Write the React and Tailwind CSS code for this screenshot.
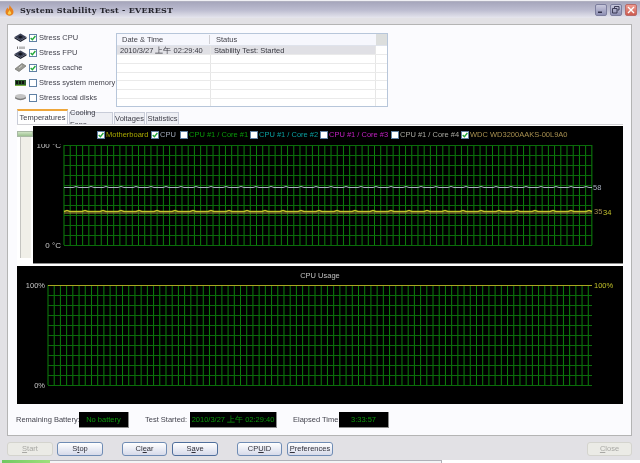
import React from 'react';

const font = { fontFamily: '"Liberation Sans", sans-serif' };

const stressItems = [
  { label: 'Stress CPU', checked: true, icon: 'cpu' },
  { label: 'Stress FPU', checked: true, icon: 'fpu' },
  { label: 'Stress cache', checked: true, icon: 'cache' },
  { label: 'Stress system memory', checked: false, icon: 'memory' },
  { label: 'Stress local disks', checked: false, icon: 'disk' },
];

const legend = [
  { label: 'Motherboard', checked: true, width: 'w-[54px]', color: 'text-[#a8a800]' },
  { label: 'CPU', checked: true, width: 'w-[29px]', color: 'text-[#a0a8b8]' },
  { label: 'CPU #1 / Core #1', checked: false, width: 'w-[70px]', color: 'text-[#0a9a0a]' },
  { label: 'CPU #1 / Core #2', checked: false, width: 'w-[70px]', color: 'text-[#0aa0a0]' },
  { label: 'CPU #1 / Core #3', checked: false, width: 'w-[71px]', color: 'text-[#c020c0]' },
  { label: 'CPU #1 / Core #4', checked: false, width: 'w-[70px]', color: 'text-[#a8a8a0]' },
  { label: 'WDC WD3200AAKS-00L9A0', checked: true, width: 'w-[96px]', color: 'text-[#a89050]' },
];

const buttons = [
  { pre: '', key: 'S', post: 'tart', disabled: true, width: 'w-[46px]', margin: 'ml-0' },
  { pre: 'S', key: 't', post: 'op', width: 'w-[46px]', margin: 'ml-[4px]' },
  { pre: 'Cl', key: 'e', post: 'ar', width: 'w-[45px]', margin: 'ml-[19px]' },
  { pre: 'S', key: 'a', post: 've', isDefault: true, width: 'w-[46px]', margin: 'ml-[5px]' },
  { pre: 'CP', key: 'U', post: 'ID', width: 'w-[45px]', margin: 'ml-[19px]' },
  { pre: '', key: 'P', post: 'references', width: 'w-[46px]', margin: 'ml-[5px]' },
  { pre: '', key: 'C', post: 'lose', disabled: true, width: 'w-[45px]', margin: 'ml-auto' },
];

// small wobble so the temperature traces are not dead straight
function trace(x0, x1, y, seed, every) {
  let d = `M${x0} ${y}`;
  let s = seed;
  for (let x = x0 + 3; x < x1; x += 3) {
    s = (s * 9301 + 49297) % 233280;
    const bump = s % every === 0 ? -1 : 0;
    d += ` L${x} ${y + bump}`;
  }
  return d + ` L${x1} ${y}`;
}

function Grid({ x0, x1, y0, y1 }) {
  const vertical = [];
  for (let x = x0; x <= x1; x += 6.21) vertical.push(x);
  const horizontal = [];
  for (let y = y0; y <= y1; y += 10) horizontal.push(y);
  return (
    <g>
      {vertical.map(x => (
        <line key={x} x1={x} x2={x} y1={y0} y2={y1} stroke="#0c820c" strokeWidth="1" />
      ))}
      {horizontal.map(y => (
        <line key={y} x1={x0} x2={x1} y1={y + 0.5} y2={y + 0.5} stroke="#0a6c0a" strokeWidth="1" />
      ))}
    </g>
  );
}

function Checkbox({ checked }) {
  return (
    <span className="w-[8px] h-[8px] shrink-0 bg-white border border-[#5f80a4] flex items-center justify-center">
      {checked && (
        <svg width="6" height="6" viewBox="0 0 6 6">
          <path d="M0.7 3 L2.4 4.8 L5.4 1" fill="none" stroke="#22a83a" strokeWidth="1.4" />
        </svg>
      )}
    </span>
  );
}

function StressIcon({ type }) {
  if (type === 'memory') {
    return (
      <svg width="13" height="9" viewBox="0 0 13 9">
        <rect x="1" y="2" width="11" height="5" fill="#2d5a2d" />
        <rect x="2" y="3" width="2" height="3" fill="#111" />
        <rect x="5" y="3" width="2" height="3" fill="#111" />
        <rect x="8" y="3" width="2" height="3" fill="#111" />
        <rect x="1" y="7" width="11" height="1" fill="#78b040" />
      </svg>
    );
  }
  if (type === 'cache') {
    return (
      <svg width="13" height="11" viewBox="0 0 13 11">
        <path d="M1 7 L8 1.5 L12 4 L5 9.5 Z" fill="#9a9a94" stroke="#6e6e6a" strokeWidth="0.7" />
        <path d="M5 6 L8 3.5" stroke="#d0d0cc" strokeWidth="1" />
      </svg>
    );
  }
  if (type === 'disk') {
    return (
      <svg width="13" height="9" viewBox="0 0 13 9">
        <ellipse cx="6.5" cy="3.6" rx="5.5" ry="2.6" fill="#c4c4c4" />
        <path d="M1 4 L1 5.5 Q6.5 9 12 5.5 L12 4 Q6.5 7.4 1 4 Z" fill="#7c7c7c" />
      </svg>
    );
  }
  return (
    <svg width="13" height={type === 'fpu' ? 14 : 11} viewBox={type === 'fpu' ? '0 0 13 14' : '0 0 13 11'}>
      <g transform={type === 'fpu' ? 'translate(0 4)' : 'translate(0 1)'}>
        <path d="M0.5 5.5 L6.5 9 L12.5 5.5 L12.5 4 L6.5 7.5 L0.5 4 Z" fill="#1e2230" />
        <path d="M0.5 4 L6.5 0.5 L12.5 4 L6.5 7.5 Z" fill="#3c4258" />
        <path d="M4 4 L6.5 2.5 L9 4 L6.5 5.5 Z" fill="#11131c" />
      </g>
      {type === 'fpu' && <path d="M3.5 0.5v2.5M6 0.5v2.5M8 0.5v2.5M10 0.5v2.5" stroke="#555" strokeWidth="0.8" />}
    </svg>
  );
}

function LogTable() {
  const rows = [0, 1, 2, 3, 4, 5, 6];
  return (
    <div className="mt-[8px] w-[272px] h-[74px] bg-white border border-[#b7c6da] overflow-hidden">
      <div className="flex h-[12px] bg-[#f6f7fd] border-b border-[#dfe3ec] text-[7.5px] text-[#44444c] leading-[12px]">
        <span className="w-[93px] pl-[5px] border-r border-[#cfcfd4] my-[1px] leading-[10px]">Date &amp; Time</span>
        <span className="w-[166px] pl-[6px] leading-[12px]">Status</span>
        <span className="flex-1 bg-[#dcdedd]" />
      </div>
      {rows.map(i => (
        <div
          key={i}
          className={`flex ${i === 0 ? 'h-[9px]' : 'h-[8.8px]'} border-b border-[#eaeaea] text-[7.5px] text-[#3a3a42] leading-[9px]`}
        >
          <span className={`w-[94px] pl-[3px] border-r border-[#e6e6e6] whitespace-nowrap ${i === 0 ? 'bg-[#e0e0e5]' : ''}`}>
            {i === 0 && '2010/3/27 上午 02:29:40'}
          </span>
          <span className={`w-[165px] pl-[3px] border-r border-[#e6e6e6] whitespace-nowrap ${i === 0 ? 'bg-[#e0e0e5]' : ''}`}>
            {i === 0 && 'Stability Test: Started'}
          </span>
          <span className="flex-1" />
        </div>
      ))}
    </div>
  );
}

function TemperatureGraph() {
  return (
    <div className="w-[590px] h-[138px] bg-black border-b border-[#8a8a8a] flex flex-col">
      <div className="h-[18px] pl-[64px] flex items-center">
        {legend.map(item => (
          <div key={item.label} className={`${item.width} flex items-center gap-[1px] shrink-0`}>
            <Checkbox checked={item.checked} />
            <span className={`text-[7.5px] whitespace-nowrap ${item.color}`}>{item.label}</span>
          </div>
        ))}
      </div>
      <svg width="590" height="119" className="block" style={font}>
        <Grid x0={31} x1={559} y0={1} y1={101} />
        <path d={trace(31, 559, 43.5, 7, 5)} fill="none" stroke="#a8b0c0" strokeWidth="1" />
        <path d={trace(31, 559, 67.5, 11, 6)} fill="none" stroke="#c2c22a" strokeWidth="1.4" />
        <line x1="31" x2="559" y1="69" y2="69" stroke="#a89040" strokeWidth="1" />
        <text x="28" y="4" textAnchor="end" fontSize="8" fill="#c8c8c8">100 °C</text>
        <text x="28" y="104" textAnchor="end" fontSize="8" fill="#c8c8c8">0 °C</text>
        <text x="560" y="46" fontSize="7.5" fill="#a8b0c0">58</text>
        <text x="561" y="70" fontSize="7.5" fill="#a89050">35</text>
        <text x="570" y="71" fontSize="7.5" fill="#c2c22a">34</text>
      </svg>
    </div>
  );
}

function UsageGraph() {
  return (
    <svg width="606" height="138" className="block bg-black" style={font}>
      <Grid x0={31} x1={575} y0={19} y1={119} />
      <line x1="31" x2="575" y1="19.5" y2="19.5" stroke="#a8a820" strokeWidth="1" />
      <text x="303" y="12" textAnchor="middle" fontSize="7.5" fill="#c0c0c0">CPU Usage</text>
      <text x="28" y="22" textAnchor="end" fontSize="7.5" fill="#c8c8c8">100%</text>
      <text x="28" y="122" textAnchor="end" fontSize="7.5" fill="#c8c8c8">0%</text>
      <text x="577" y="22" fontSize="7.5" fill="#c2c22a">100%</text>
    </svg>
  );
}

function Readout({ width, children }) {
  return (
    <div className={`${width} h-[16px] bg-black border-b border-r border-[#8c8c8c] text-[#0a960a] text-[7.5px] flex items-center justify-center whitespace-nowrap`}>
      {children}
    </div>
  );
}

function WindowButton({ kind }) {
  const shade = kind === 'close'
    ? 'bg-gradient-to-b from-[#ef9c90] to-[#cc5a50] border-[#b86a68]'
    : 'bg-gradient-to-b from-[#c8c8dc] to-[#8f90b4] border-[#7c7e9e]';
  return (
    <div className={`w-[12px] h-[12px] rounded-[2px] border flex items-center justify-center ${shade}`}>
      <svg width="8" height="8" viewBox="0 0 8 8">
        {kind === 'min' && <rect x="1" y="5.5" width="4" height="1.5" fill="#30304a" />}
        {kind === 'restore' && (
          <path d="M2.5 2V0.5H7V4H5.5M0.5 2.5H5V7H0.5Z" fill="none" stroke="#30304a" strokeWidth="0.9" />
        )}
        {kind === 'close' && <path d="M1 1L7 7M7 1L1 7" stroke="#fff" strokeWidth="1.4" />}
      </svg>
    </div>
  );
}

export default function App() {
  return (
    <div className="w-[640px] h-[463px] overflow-hidden bg-white flex flex-col blur-[0.35px]" style={font}>
      <div className="h-[2px] bg-[#f0f0f4] border-b border-[#b0b0c0]" />

      {/* Title bar */}
      <div className="h-[16px] flex items-center pl-[5px] pr-[3px] bg-gradient-to-b from-[#a6a6bc] via-[#bcbcd0] to-[#e6e6ee]">
        <svg width="9" height="12" viewBox="0 0 9 12">
          <path d="M4.5 0.5 C5 3 8.5 4.5 8.5 8 C8.5 10.5 6.5 11.7 4.5 11.7 C2.5 11.7 0.5 10.5 0.5 8 C0.5 6 1.8 5 2.3 3.5 C3 4.2 3.3 4.8 3.4 5.5 C4.3 4 4.6 2.2 4.5 0.5 Z" fill="#e8811c" />
          <path d="M4.5 6 C5 7.5 6.5 8 6.2 9.6 C6 10.8 3 10.8 2.8 9.5 C2.7 8.4 4 7.6 4.5 6 Z" fill="#f8d050" />
        </svg>
        <span
          className="ml-[6px] text-[9px] font-bold text-[#24242c] tracking-[0.25px] whitespace-nowrap"
          style={{ fontFamily: '"DejaVu Serif", serif', fontSize: '8px' }}
        >
          System Stability Test - EVEREST
        </span>
        <div className="ml-auto flex gap-[3px]">
          <WindowButton kind="min" />
          <WindowButton kind="restore" />
          <WindowButton kind="close" />
        </div>
      </div>

      {/* Window body */}
      <div className="flex-1 bg-[#e2e1e5] pl-[7px] pr-[8px] pt-[6px] min-h-0">
        <div className="h-[412px] bg-[#fbfbfe] border border-[#b4b4b4] flex flex-col">
          <div className="h-[84px] flex shrink-0">
            <div className="w-[108px] pl-[6px] pt-[5px]">
              {stressItems.map(item => (
                <div key={item.label} className="h-[15px] flex items-center">
                  <span className="w-[15px] shrink-0 flex items-center">
                    <StressIcon type={item.icon} />
                  </span>
                  <Checkbox checked={item.checked} />
                  <span className="ml-[2px] text-[7.5px] text-[#45454f] whitespace-nowrap">{item.label}</span>
                </div>
              ))}
            </div>
            <LogTable />
          </div>

          {/* Tabs */}
          <div className="h-[15px] pl-[9px] flex items-end shrink-0 text-[7.5px] text-[#3c3c46]">
            <div className="w-[51px] h-[15px] bg-white border-t-2 border-t-[#eea63a] border-x border-[#c8ccd8] flex items-center justify-center">
              Temperatures
            </div>
            <div className="ml-[1px] w-[44px] h-[12px] bg-[#eeeff4] border border-b-0 border-[#c8ccd8] flex items-center justify-center">
              Cooling Fans
            </div>
            <div className="ml-[1px] w-[31px] h-[12px] bg-[#eeeff4] border border-b-0 border-[#c8ccd8] flex items-center justify-center">
              Voltages
            </div>
            <div className="ml-[1px] w-[33px] h-[12px] bg-[#eeeff4] border border-b-0 border-[#c8ccd8] flex items-center justify-center">
              Statistics
            </div>
          </div>

          <div className="ml-[9px] w-[606px] h-[280px] bg-white border-t border-[#d0d0d4] pt-[1px] shrink-0">
            <div className="h-[138px] flex">
              <div className="w-[16px] flex flex-col pt-[5px] items-start">
                <div className="w-[16px] h-[6px] bg-gradient-to-b from-[#cfe4c4] to-[#9cc090] border border-[#a8b8a4]" />
                <div className="ml-[3px] w-[11px] h-[121px] bg-[#f0efe8] border-l border-[#c4c4c0]" />
              </div>
              <TemperatureGraph />
            </div>
            <div className="mt-[2px]">
              <UsageGraph />
            </div>
          </div>

          {/* Status strip */}
          <div className="mt-[8px] h-[16px] pl-[8px] flex items-center text-[7.5px] text-[#45454f] whitespace-nowrap shrink-0">
            <span className="w-[63px]">Remaining Battery:</span>
            <Readout width="w-[50px]">No battery</Readout>
            <span className="ml-[16px] w-[45px]">Test Started:</span>
            <Readout width="w-[87px]">2010/3/27 上午 02:29:40</Readout>
            <span className="ml-[16px] w-[46px]">Elapsed Time:</span>
            <Readout width="w-[50px]">3:33:57</Readout>
          </div>
        </div>

        {/* Button row */}
        <div className="mt-[6px] h-[14px] flex items-center">
          {buttons.map(b => (
            <div
              key={b.pre + b.key + b.post}
              className={`${b.width} ${b.margin} h-[14px] rounded-[3px] border flex items-center justify-center text-[7.5px] whitespace-nowrap ${
                b.disabled
                  ? 'bg-[#ebebe6] border-[#d4d4ce] text-[#a8a8a4]'
                  : b.isDefault
                  ? 'bg-gradient-to-b from-white to-[#d6daea] border-[#4f6f9c] text-[#30303a]'
                  : 'bg-gradient-to-b from-white to-[#d6daea] border-[#6f8cb4] text-[#30303a]'
              }`}
            >
              {b.pre}
              <span className="underline">{b.key}</span>
              {b.post}
            </div>
          ))}
        </div>
      </div>

      {/* Taskbar sliver */}
      <div className="h-[3px] flex shrink-0">
        <div className="w-[2px] bg-[#e2e1e5]" />
        <div className="w-[48px] bg-gradient-to-r from-[#70c860] to-[#9ee07c]" />
        <div className="w-[392px] bg-[#f4f4f6] border-t border-r border-[#b0b0b8]" />
      </div>
    </div>
  );
}
